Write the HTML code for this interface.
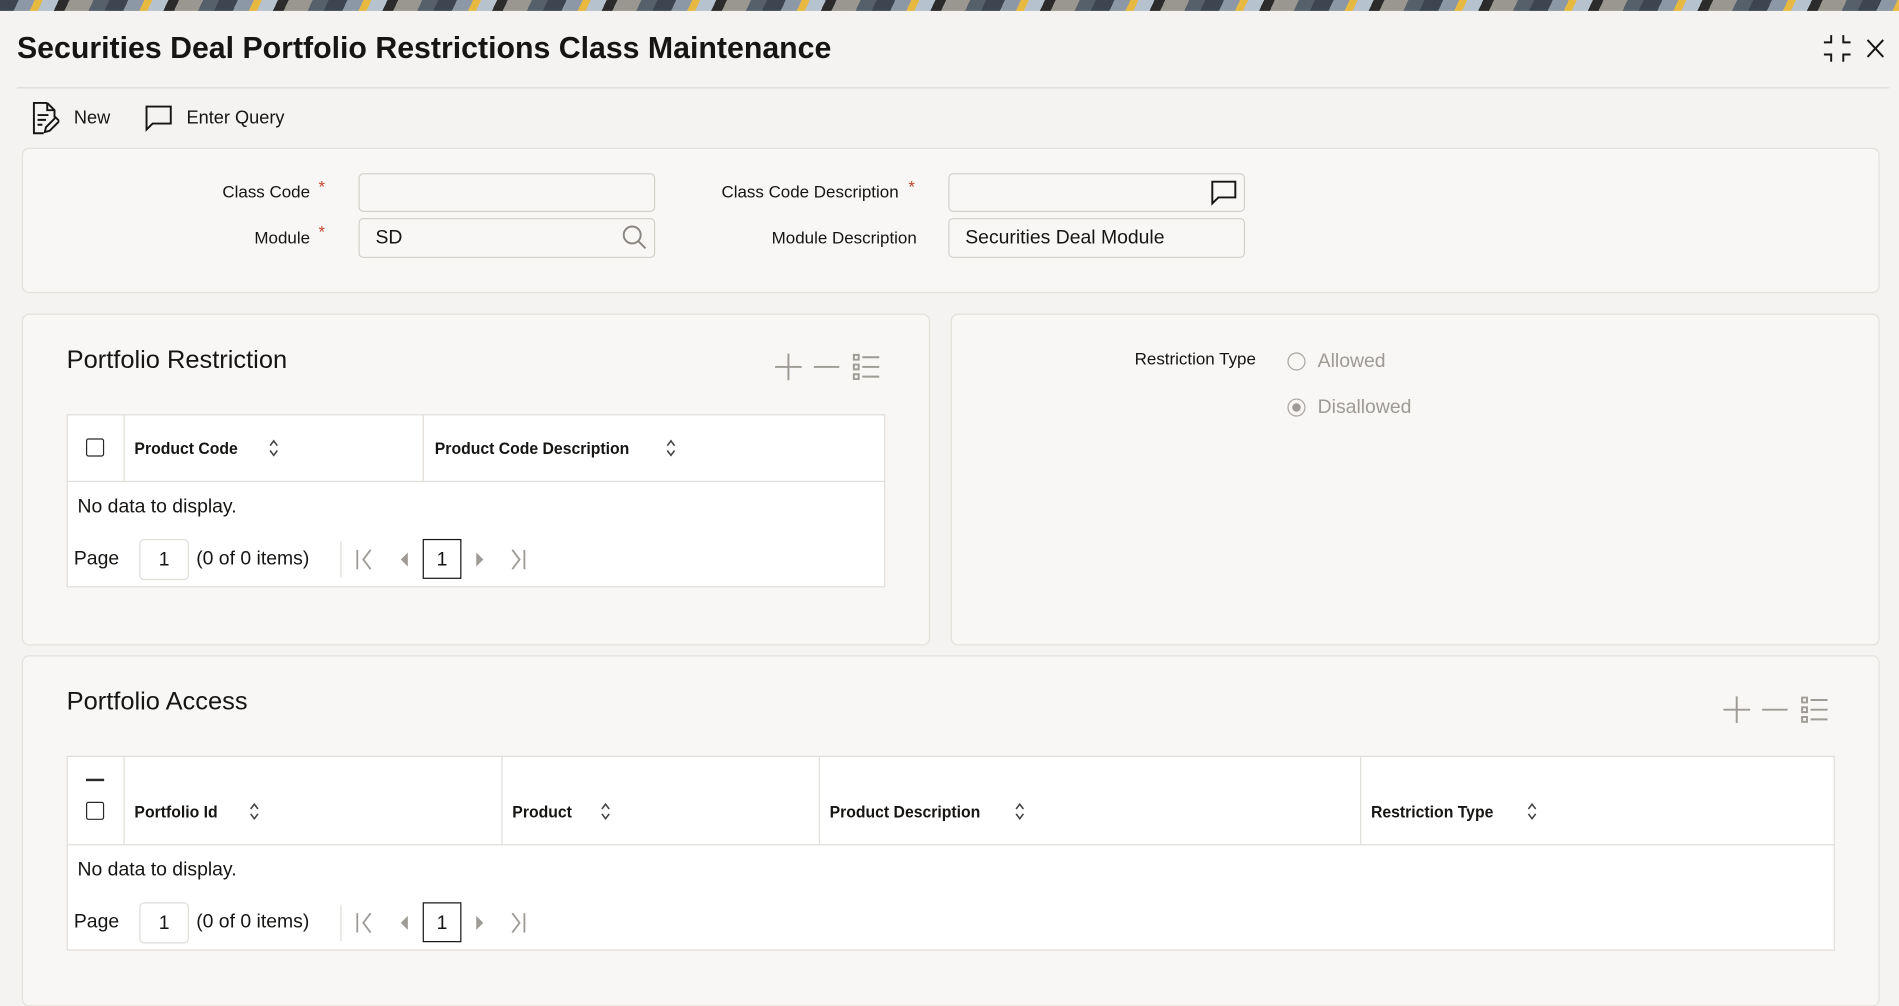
<!DOCTYPE html>
<html><head><meta charset="utf-8">
<style>
html,body{margin:0;padding:0;width:1899px;height:981px;overflow:hidden;background:#f4f3f1;}
#w{position:absolute;left:0;top:0;width:1568px;height:810px;transform:scale(1.21110);transform-origin:0 0;font-family:"Liberation Sans",sans-serif;color:#161513;}
.a{position:absolute;white-space:nowrap;}
.banner{position:absolute;left:0;top:0;width:1568px;height:9px;background:repeating-linear-gradient(115deg,#3d4650 0 14px,#8c98a6 14px 26px,#e7b941 26px 32px,#b7c2cf 32px 44px,#2b2b2b 44px 52px,#9a9790 52px 70px,#56606b 70px 82px);}
.panel{position:absolute;background:#f8f7f5;border:1px solid #e4e1dc;border-radius:6px;box-sizing:border-box;}
.lbl{position:absolute;font-size:14px;text-align:right;white-space:nowrap;}
.ast{position:absolute;color:#c74634;font-size:14px;}
.inp{position:absolute;border:1px solid #d4d1cc;border-radius:4px;background:#f8f7f5;box-sizing:border-box;font-size:16px;padding-left:13px;line-height:30px;}
.tbl{position:absolute;background:#fff;border:1px solid #e0ddd8;box-sizing:border-box;}
.th{position:absolute;font-size:14px;font-weight:bold;white-space:nowrap;transform:scaleX(.93);transform-origin:0 50%;}
.vl{position:absolute;width:1px;background:#e0ddd8;}
.cb{position:absolute;width:15px;height:15px;border:1.5px solid #2a2927;border-radius:2px;box-sizing:border-box;}
.sort{position:absolute;}
.t16{font-size:16px;}
.gray{color:#9e9a95;}
</style></head><body>
<div id="w">
<div class="banner"></div>
<div class="a" style="left:14px;top:26px;font-size:25px;font-weight:bold;">Securities Deal Portfolio Restrictions Class Maintenance</div>
<svg class="a" style="left:1505px;top:27px" width="52" height="26" viewBox="0 0 52 26" fill="none" stroke="#161513" stroke-width="1.6">
<path d="M7 2v6H1M17 2v6h6M7 24v-6H1M17 24v-6h6"/>
<path d="M37 6l13 14M50 6L37 20"/>
</svg>
<div class="a" style="left:14px;top:72px;width:1546px;height:1px;background:#dedbd6;"></div>
<svg class="a" style="left:25px;top:84px" width="24" height="28" viewBox="0 0 24 28" fill="none" stroke="#161513" stroke-width="1.6">
<path d="M14 1H3v25h8M14 1l6 6v6M14 1v6h6M6 11h9M6 15h7M6 19h4"/><path d="M12 25l1-4 8-8 3 3-8 8z"/>
</svg>
<div class="a" style="left:61px;top:89px;font-size:15px;">New</div>
<svg class="a" style="left:119px;top:86px" width="24" height="24" viewBox="0 0 24 24" fill="none" stroke="#161513" stroke-width="1.6">
<path d="M2 2h20v14H7l-5 5z"/>
</svg>
<div class="a" style="left:154px;top:89px;font-size:15px;">Enter Query</div>
<div class="panel" style="left:18px;top:122px;width:1534px;height:120px;"></div>
<div class="lbl" style="right:1312px;top:150px;">Class Code</div><div class="ast" style="left:263px;top:146px;">*</div>
<div class="inp" style="left:296px;top:143px;width:245px;height:32px;"></div>
<div class="lbl" style="right:1312px;top:188px;">Module</div><div class="ast" style="left:263px;top:183px;">*</div>
<div class="inp" style="left:296px;top:180px;width:245px;height:33px;line-height:32px;">SD</div>
<svg class="a" style="left:513px;top:185px" width="22" height="22" viewBox="0 0 22 22" fill="none" stroke="#8a8580" stroke-width="1.6"><circle cx="9" cy="9" r="7"/><path d="M14 14l6 6"/></svg>
<div class="lbl" style="right:826px;top:150px;">Class Code Description</div><div class="ast" style="left:750px;top:146px;">*</div>
<div class="inp" style="left:783px;top:143px;width:245px;height:32px;"></div>
<svg class="a" style="left:999px;top:148px" width="24" height="22" viewBox="0 0 24 22" fill="none" stroke="#161513" stroke-width="1.6"><path d="M2 2h19v13H7l-5 5z"/></svg>
<div class="lbl" style="right:811px;top:188px;">Module Description</div>
<div class="inp" style="left:783px;top:180px;width:245px;height:33px;line-height:32px;">Securities Deal Module</div>
<div class="panel" style="left:18px;top:259px;width:750px;height:274px;"></div>
<div class="a" style="left:55px;top:286px;font-size:21px;">Portfolio Restriction</div>
<svg class="a" style="left:639px;top:290px" width="90" height="26" viewBox="0 0 90 26" fill="none" stroke="#9e9a95" stroke-width="1.6">
<path d="M12 2v22M1 13h22M33 13h21M66 3h4v4h-4zM66 11h4v4h-4zM66 19h4v4h-4zM73 5h14M73 13h14M73 21h14"/>
</svg>
<div class="tbl" style="left:55px;top:342px;width:676px;height:143px;"></div>
<div class="a" style="left:55px;top:397px;width:676px;height:1px;background:#e0ddd8;"></div>
<div class="vl" style="left:102px;top:343px;height:54px;"></div>
<div class="vl" style="left:349px;top:343px;height:54px;"></div>
<div class="cb" style="left:71px;top:362px;"></div>
<div class="th" style="left:111px;top:362px;">Product Code</div>
<svg class="sort" style="left:221px;top:362px" width="10" height="16" viewBox="0 0 10 16" fill="none" stroke="#444" stroke-width="1.3"><path d="M2 6l3-4 3 4M2 10l3 4 3-4"/></svg>
<div class="th" style="left:359px;top:362px;">Product Code Description</div>
<svg class="sort" style="left:549px;top:362px" width="10" height="16" viewBox="0 0 10 16" fill="none" stroke="#444" stroke-width="1.3"><path d="M2 6l3-4 3 4M2 10l3 4 3-4"/></svg>
<div class="a" style="left:64px;top:410px;font-size:16px;">No data to display.</div>
<div class="a" style="left:61px;top:453px;font-size:16px;">Page</div>
<div class="a" style="left:115px;top:445px;width:41px;height:34px;border:1px solid #e0ddd8;border-radius:4px;box-sizing:border-box;text-align:center;line-height:34px;font-size:16px;">1</div>
<div class="a" style="left:162px;top:453px;font-size:16px;">(0 of 0 items)</div>
<div class="vl" style="left:281px;top:447px;height:30px;"></div>
<svg class="a" style="left:292px;top:453px" width="148" height="18" viewBox="0 0 148 18" fill="none" stroke="#9e9a95" stroke-width="1.5">
<path d="M3 1v16M14 1L8 9l6 8"/><path d="M44 5l-4 4 4 4z" fill="#9e9a95"/><path d="M102 5l4 4-4 4z" fill="#9e9a95"/><path d="M131 1l6 8-6 8M141 1v16"/>
</svg>
<div class="a" style="left:349px;top:445px;width:32px;height:33px;border:1px solid #161513;box-sizing:border-box;text-align:center;line-height:33px;font-size:16px;">1</div>
<div class="panel" style="left:785px;top:259px;width:767px;height:274px;"></div>
<div class="lbl" style="right:531px;top:288px;">Restriction Type</div>
<div class="a" style="left:1063px;top:291px;width:15px;height:15px;border:1.3px solid #aaa6a1;border-radius:50%;box-sizing:border-box;"></div>
<div class="a gray" style="left:1088px;top:290px;font-size:16px;">Allowed</div>
<div class="a" style="left:1063px;top:329px;width:15px;height:15px;border:1.3px solid #aaa6a1;border-radius:50%;box-sizing:border-box;"></div>
<div class="a" style="left:1067px;top:333px;width:7px;height:7px;background:#9e9a95;border-radius:50%;"></div>
<div class="a gray" style="left:1088px;top:328px;font-size:16px;">Disallowed</div>
<div class="panel" style="left:18px;top:541px;width:1534px;height:290px;"></div>
<div class="a" style="left:55px;top:568px;font-size:21px;">Portfolio Access</div>
<svg class="a" style="left:1422px;top:573px" width="90" height="26" viewBox="0 0 90 26" fill="none" stroke="#9e9a95" stroke-width="1.6">
<path d="M12 2v22M1 13h22M33 13h21M66 3h4v4h-4zM66 11h4v4h-4zM66 19h4v4h-4zM73 5h14M73 13h14M73 21h14"/>
</svg>
<div class="tbl" style="left:55px;top:624px;width:1460px;height:161px;"></div>
<div class="a" style="left:55px;top:697px;width:1460px;height:1px;background:#e0ddd8;"></div>
<div class="vl" style="left:102px;top:625px;height:72px;"></div>
<div class="vl" style="left:414px;top:625px;height:72px;"></div>
<div class="vl" style="left:676px;top:625px;height:72px;"></div>
<div class="vl" style="left:1123px;top:625px;height:72px;"></div>
<div class="a" style="left:71px;top:643px;width:15px;height:1.5px;background:#2a2927;"></div>
<div class="cb" style="left:71px;top:662px;"></div>
<div class="th" style="left:111px;top:662px;">Portfolio Id</div>
<svg class="sort" style="left:205px;top:662px" width="10" height="16" viewBox="0 0 10 16" fill="none" stroke="#444" stroke-width="1.3"><path d="M2 6l3-4 3 4M2 10l3 4 3-4"/></svg>
<div class="th" style="left:423px;top:662px;">Product</div>
<svg class="sort" style="left:495px;top:662px" width="10" height="16" viewBox="0 0 10 16" fill="none" stroke="#444" stroke-width="1.3"><path d="M2 6l3-4 3 4M2 10l3 4 3-4"/></svg>
<div class="th" style="left:685px;top:662px;">Product Description</div>
<svg class="sort" style="left:837px;top:662px" width="10" height="16" viewBox="0 0 10 16" fill="none" stroke="#444" stroke-width="1.3"><path d="M2 6l3-4 3 4M2 10l3 4 3-4"/></svg>
<div class="th" style="left:1132px;top:662px;">Restriction Type</div>
<svg class="sort" style="left:1260px;top:662px" width="10" height="16" viewBox="0 0 10 16" fill="none" stroke="#444" stroke-width="1.3"><path d="M2 6l3-4 3 4M2 10l3 4 3-4"/></svg>
<div class="a" style="left:64px;top:710px;font-size:16px;">No data to display.</div>
<div class="a" style="left:61px;top:753px;font-size:16px;">Page</div>
<div class="a" style="left:115px;top:745px;width:41px;height:34px;border:1px solid #e0ddd8;border-radius:4px;box-sizing:border-box;text-align:center;line-height:34px;font-size:16px;">1</div>
<div class="a" style="left:162px;top:753px;font-size:16px;">(0 of 0 items)</div>
<div class="vl" style="left:281px;top:747px;height:30px;"></div>
<svg class="a" style="left:292px;top:753px" width="148" height="18" viewBox="0 0 148 18" fill="none" stroke="#9e9a95" stroke-width="1.5">
<path d="M3 1v16M14 1L8 9l6 8"/><path d="M44 5l-4 4 4 4z" fill="#9e9a95"/><path d="M102 5l4 4-4 4z" fill="#9e9a95"/><path d="M131 1l6 8-6 8M141 1v16"/>
</svg>
<div class="a" style="left:349px;top:745px;width:32px;height:33px;border:1px solid #161513;box-sizing:border-box;text-align:center;line-height:33px;font-size:16px;">1</div>
</div>
</body></html>
